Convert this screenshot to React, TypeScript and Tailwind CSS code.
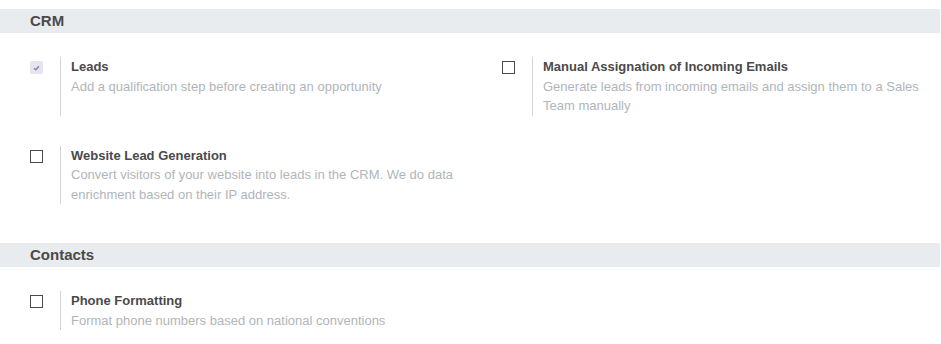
import React from 'react';

type Setting = { title: string; desc: string; checked?: boolean };

const crm: Setting[] = [
  { title: 'Leads', desc: 'Add a qualification step before creating an opportunity', checked: true },
  { title: 'Manual Assignation of Incoming Emails', desc: 'Generate leads from incoming emails and assign them to a Sales Team manually' },
  { title: 'Website Lead Generation', desc: 'Convert visitors of your website into leads in the CRM. We do data enrichment based on their IP address.' },
];

const contacts: Setting[] = [
  { title: 'Phone Formatting', desc: 'Format phone numbers based on national conventions' },
];

function Checkbox({ checked }: { checked?: boolean }) {
  if (checked) {
    return (
      <div className="w-[13px] h-[13px] mt-[4px] rounded-[2px] bg-[#e6e4ee] flex items-center justify-center">
        <svg width="7" height="6" viewBox="0 0 7 6" fill="none">
          <path d="M1 3.2 L2.8 4.8 L6 1.2" stroke="#8d80ad" strokeWidth="1.4" />
        </svg>
      </div>
    );
  }
  return <div className="w-[13px] h-[13px] mt-[4px] border border-[#4a4a4a] bg-white" />;
}

function SettingBox({ s }: { s: Setting }) {
  return (
    <div className="flex pl-[30px] pr-4">
      <div className="w-[30px] shrink-0">
        <Checkbox checked={s.checked} />
      </div>
      <div className="border-l border-[#ced4da] pl-[10px] text-[13px] leading-[19.5px] max-w-[410px]">
        <div className="font-bold text-[#4a4a4a]">{s.title}</div>
        <div className="text-[#b1b5ba]">{s.desc}</div>
      </div>
    </div>
  );
}

function Section({ title, items }: { title: string; items: Setting[] }) {
  return (
    <section>
      <h2 className="bg-[#e9ecef] h-6 pl-[30px] text-[15px] leading-6 font-bold text-[#4a4a4a] mr-px">{title}</h2>
      <div className="grid grid-cols-[472px_1fr] gap-y-[30px] mt-6 mb-[39px]">
        {items.map((s) => (
          <SettingBox key={s.title} s={s} />
        ))}
      </div>
    </section>
  );
}

export default function App() {
  return (
    <div className="bg-white w-[941px] h-[344px] overflow-hidden pt-[9px]" style={{ fontFamily: '"Liberation Sans", Arial, sans-serif' }}>
      <Section title="CRM" items={crm} />
      <Section title="Contacts" items={contacts} />
    </div>
  );
}
